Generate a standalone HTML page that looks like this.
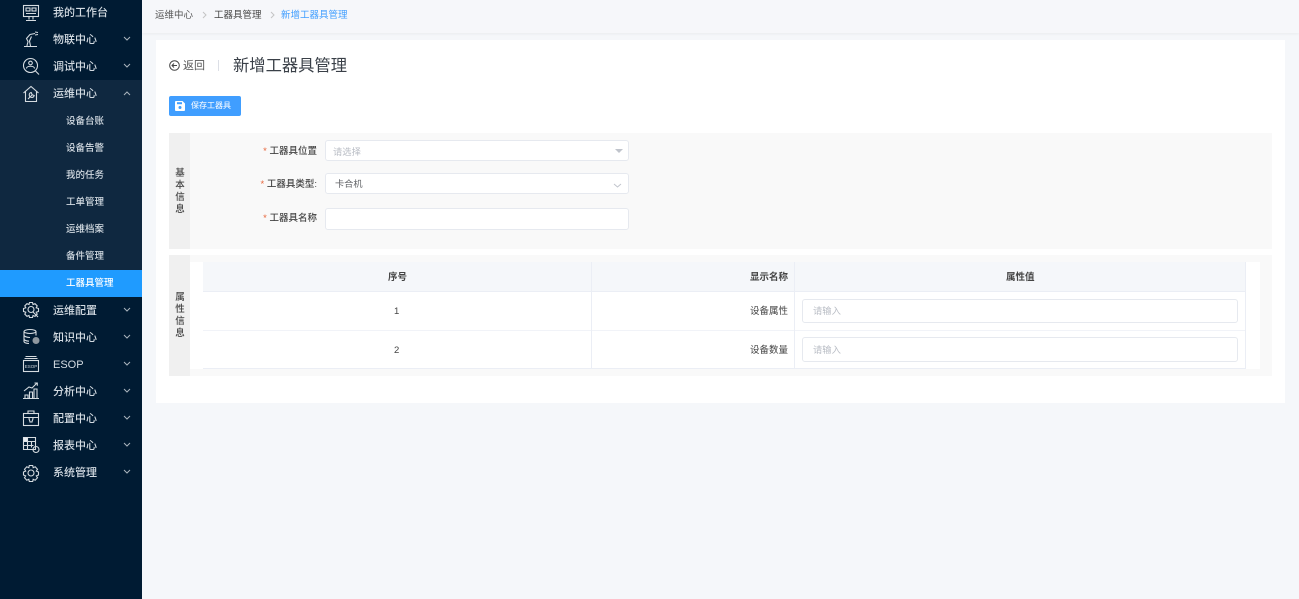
<!DOCTYPE html>
<html lang="zh"><head><meta charset="utf-8"><style>
*{box-sizing:border-box}
html,body{margin:0;padding:0;width:1299px;height:599px;overflow:hidden;background:#f5f7fa;font-family:"Liberation Sans","Noto Sans CJK SC",sans-serif;color:#333}
#w{position:absolute;left:0;top:0;width:1299px;height:599px;overflow:hidden;background:#f5f7fa;filter:blur(.35px)}
.a{position:absolute;white-space:nowrap}
#side{left:0;top:0;width:142px;height:599px;background:#001b33}
#open{left:0;top:80px;width:142px;height:190px;background:#0f2840}
#act{left:0;top:270px;width:142px;height:27px;background:#1f9bff}
.m{left:53px;font-size:11px;line-height:14px;color:#d3dbe2;font-weight:500}
.s{left:66px;font-size:9.5px;line-height:12px;color:#d3dbe2;font-weight:500}
.ic{left:21px;width:20px;height:20px;fill:none;stroke:#d5dbe0;stroke-width:1.1}
.ch{left:123px;width:8px;height:5px;fill:none;stroke:#aab5be;stroke-width:1}
.box{background:#fff;border:1px solid #e6e9ef;border-radius:3px}
.lab{font-size:9.5px;line-height:12px;color:#444;text-align:right;font-weight:500}
.lab i{color:#e8663c;font-style:normal}
.v{font-size:9.5px;line-height:12px;width:12px;text-align:center;color:#444;white-space:normal;font-weight:500}
.t{font-size:9.5px;line-height:12px;color:#444}
.ph{font-size:9.3px;line-height:12px;color:#b8bcc4}
</style></head><body><div id="w">
<div class="a" id="side"></div><div class="a" id="open"></div><div class="a" id="act"></div>

<svg class="a ic" style="top:3px" viewBox="0 0 20 20"><rect x="2.500" y="2.500" width="15" height="11"/><rect x="5" y="5" width="4" height="3"/><rect x="11" y="5" width="4" height="3"/><path d="M5 10.500h10M8 13.500v3M12 13.500v3M5 17.500h10"/></svg>
<svg class="a ic" style="top:30px" viewBox="0 0 20 20"><path d="M3 16.500h13M6 16c0-2 1-3 1-4.500L5.500 8.500 9 4.500l5-1M9.500 16l-1-5 2-4.500M14 2l3 .5M14 5l3-.5"/></svg>
<svg class="a ic" style="top:57px" viewBox="0 0 20 20"><circle cx="9.500" cy="8.500" r="7"/><circle cx="9.500" cy="6" r="1.800"/><path d="M5.500 11.500c0-3 8-3 8 0M14.500 14l3.500 3.500"/></svg>
<svg class="a ic" style="top:84px" viewBox="0 0 20 20"><path d="M2.500 9L10 2.500 17.500 9M4.500 7.500v10h11v-10"/><path d="M7 15l4-4M10.200 8.500a2.500 2.500 0 1 0 3 3l-2-.8z"/></svg>
<svg class="a ic" style="top:300px" viewBox="0 0 20 20"><path d="M8.500 2.500h3l.5 2 2-.8 2.200 2.200-1 1.900 2.300.7v3l-2.300.7 1 1.900-2.200 2.200-2-.8-.5 2h-3l-.5-2-2 .8-2.200-2.200 1-1.900-2.300-.7v-3l2.300-.7-1-1.900 2.200-2.200 2 .8z"/><circle cx="10" cy="9.500" r="3"/><path d="M12 12l5 5"/></svg>
<svg class="a ic" style="top:327px" viewBox="0 0 20 20"><ellipse cx="9" cy="4.500" rx="6" ry="2"/><path d="M3 4.500v10c0 1 2 2 5 2M3 8c0 1.500 3 2.500 6 2.500M3 12c0 1 2 2 5 2.200M15 4.500v4"/><circle cx="15" cy="13.500" r="3.500" fill="#8f98a0" stroke="none"/></svg>
<svg class="a ic" style="top:354px" viewBox="0 0 20 20"><path d="M4.500 2.500h11M3.500 4.500h13"/><rect x="2.500" y="6.500" width="15" height="11"/><text x="10" y="14" font-size="4.500" text-anchor="middle" fill="#cfd6dc" stroke="none" font-family="Liberation Sans">ESOP</text></svg>
<svg class="a ic" style="top:381px" viewBox="0 0 20 20"><path d="M2 17.500h16M4 17v-3h3v3M8.500 17v-6h3v6M13 17V8h3v9M3 10l5-4 3 1 5-5M13.500 2h2.800v2.800"/></svg>
<svg class="a ic" style="top:408px" viewBox="0 0 20 20"><rect x="2.500" y="5.500" width="15" height="12"/><path d="M2.500 9.500h15M7 5.500V3h6v2.500M8 9.500c0 3 1 3 1 4.500h2c0-1.500 1-1.500 1-4.500"/></svg>
<svg class="a ic" style="top:435px" viewBox="0 0 20 20"><path d="M2.500 2.500h12v12h-12zM2.500 6.500h12M2.500 10.500h10M6.500 2.500v12M10.500 6.500v6"/><rect x="2.500" y="2.500" width="4" height="4" fill="#e6ebef" stroke="none"/><circle cx="15" cy="14.500" r="3"/></svg>
<svg class="a ic" style="top:463px" viewBox="0 0 20 20"><path d="M8.300 2.500h3.400l.5 2.200 2-.9 2.300 2.500-1.200 1.800 2.200.9v3l-2.200.9 1.200 1.800-2.300 2.500-2-.9-.5 2.200H8.300l-.5-2.200-2 .9-2.300-2.500 1.200-1.800-2.200-.9v-3l2.200-.9-1.200-1.800 2.300-2.500 2 .9z"/><circle cx="10" cy="10" r="3"/></svg>

<div class="a m" style="top:6px">我的工作台</div>
<div class="a m" style="top:33px">物联中心</div>
<div class="a m" style="top:60px">调试中心</div>
<div class="a m" style="top:87px">运维中心</div>
<div class="a s" style="top:116px">设备台账</div>
<div class="a s" style="top:143px">设备告警</div>
<div class="a s" style="top:170px">我的任务</div>
<div class="a s" style="top:197px">工单管理</div>
<div class="a s" style="top:224px">运维档案</div>
<div class="a s" style="top:251px">备件管理</div>
<div class="a s" style="top:278px;color:#fff">工器具管理</div>
<div class="a m" style="top:304px">运维配置</div>
<div class="a m" style="top:331px">知识中心</div>
<div class="a m" style="top:358px">ESOP</div>
<div class="a m" style="top:385px">分析中心</div>
<div class="a m" style="top:412px">配置中心</div>
<div class="a m" style="top:439px">报表中心</div>
<div class="a m" style="top:466px">系统管理</div>

<svg class="a ch" style="top:36px" viewBox="0 0 8 5"><path d="M1 1l3 3 3-3"/></svg>
<svg class="a ch" style="top:63px" viewBox="0 0 8 5"><path d="M1 1l3 3 3-3"/></svg>
<svg class="a ch" style="top:91px" viewBox="0 0 8 5"><path d="M1 4l3-3 3 3"/></svg>
<svg class="a ch" style="top:307px" viewBox="0 0 8 5"><path d="M1 1l3 3 3-3"/></svg>
<svg class="a ch" style="top:334px" viewBox="0 0 8 5"><path d="M1 1l3 3 3-3"/></svg>
<svg class="a ch" style="top:361px" viewBox="0 0 8 5"><path d="M1 1l3 3 3-3"/></svg>
<svg class="a ch" style="top:388px" viewBox="0 0 8 5"><path d="M1 1l3 3 3-3"/></svg>
<svg class="a ch" style="top:415px" viewBox="0 0 8 5"><path d="M1 1l3 3 3-3"/></svg>
<svg class="a ch" style="top:442px" viewBox="0 0 8 5"><path d="M1 1l3 3 3-3"/></svg>
<svg class="a ch" style="top:469px" viewBox="0 0 8 5"><path d="M1 1l3 3 3-3"/></svg>

<!-- top bar -->
<div class="a" style="left:142px;top:0;width:1157px;height:33px;background:#f6f7fa;box-shadow:0 1px 3px rgba(0,0,0,.05)"></div>
<div class="a t" style="left:155px;top:10px;color:#555">运维中心</div>
<svg class="a" style="left:202px;top:11px;width:5px;height:8px;fill:none;stroke:#c4c4c4" viewBox="0 0 5 8"><path d="M1 1l3 3-3 3"/></svg>
<div class="a t" style="left:214px;top:10px;color:#444">工器具管理</div>
<svg class="a" style="left:270px;top:11px;width:5px;height:8px;fill:none;stroke:#c4c4c4" viewBox="0 0 5 8"><path d="M1 1l3 3-3 3"/></svg>
<div class="a t" style="left:281px;top:10px;color:#409eff">新增工器具管理</div>

<!-- card -->
<div class="a" style="left:156px;top:40px;width:1129px;height:363px;background:#fff"></div>
<svg class="a" style="left:169px;top:60px;width:11px;height:11px;fill:none;stroke:#444" viewBox="0 0 11 11"><circle cx="5.500" cy="5.500" r="4.800"/><path d="M8 5.500H3M5 3.500l-2 2 2 2"/></svg>
<div class="a" style="left:183px;top:59px;font-size:11px;line-height:14px;color:#555">返回</div>
<div class="a" style="left:218px;top:60px;width:1px;height:11px;background:#dcdfe6"></div>
<div class="a" style="left:233px;top:56px;font-size:16.300px;line-height:20px;color:#3a4048">新增工器具管理</div>

<div class="a" style="left:169px;top:96px;width:72px;height:20px;background:#409eff;border-radius:2px"></div>
<svg class="a" style="left:175px;top:101px;width:10px;height:10px" viewBox="0 0 10 10"><path d="M0 1a1 1 0 0 1 1-1h6.500L10 2.500V9a1 1 0 0 1-1 1H1a1 1 0 0 1-1-1z" fill="#fff"/><rect x="2" y="1.200" width="5" height="2" fill="#409eff"/><circle cx="5" cy="6.500" r="1.500" fill="#409eff"/></svg>
<div class="a" style="left:191px;top:100px;font-size:8px;line-height:12px;color:#e8f3ff;font-weight:500">保存工器具</div>

<!-- section 1 -->
<div class="a" style="left:169px;top:133px;width:1103px;height:116px;background:#f9f9f9"></div>
<div class="a" style="left:169px;top:133px;width:21px;height:116px;background:#f0f0f0"></div>
<div class="a v" style="left:174px;top:168px">基本信息</div>
<div class="a lab" style="left:200px;top:146px;width:117px"><i>*</i> 工器具位置</div>
<div class="a lab" style="left:200px;top:179px;width:117px"><i>*</i> 工器具类型:</div>
<div class="a lab" style="left:200px;top:213px;width:117px"><i>*</i> 工器具名称</div>
<div class="a box" style="left:325px;top:140px;width:304px;height:21px"></div>
<div class="a ph" style="left:333px;top:146px">请选择</div>
<div class="a" style="left:615px;top:149px;border:4px solid transparent;border-top:4px solid #c0c4cc;border-bottom:0"></div>
<div class="a box" style="left:325px;top:173px;width:304px;height:21px"></div>
<div class="a t" style="left:335px;top:178px;color:#606266;font-size:9.200px">卡合机</div>
<svg class="a" style="left:613px;top:183px;width:9px;height:5px;fill:none;stroke:#c0c4cc" viewBox="0 0 9 5"><path d="M1 1l3.500 3L8 1"/></svg>
<div class="a box" style="left:325px;top:208px;width:304px;height:22px"></div>

<!-- section 2 -->
<div class="a" style="left:169px;top:255px;width:1103px;height:121px;background:#f9f9f9"></div>
<div class="a" style="left:169px;top:255px;width:21px;height:121px;background:#f0f0f0"></div>
<div class="a v" style="left:174px;top:292px">属性信息</div>
<div class="a" style="left:190px;top:262px;width:1070px;height:107px;background:#fff"></div>
<div class="a" style="left:203px;top:262px;width:1043px;height:30px;background:#f5f7fa"></div>
<div class="a" style="left:203px;top:291px;width:1043px;height:1px;background:#ebeef5"></div>
<div class="a" style="left:203px;top:330px;width:1043px;height:1px;background:#f1f3f8"></div>
<div class="a" style="left:203px;top:368px;width:1043px;height:1px;background:#ebeef5"></div>
<div class="a" style="left:591px;top:262px;width:1px;height:107px;background:#ebeef5"></div>
<div class="a" style="left:794px;top:262px;width:1px;height:107px;background:#ebeef5"></div>
<div class="a" style="left:1245px;top:262px;width:1px;height:107px;background:#ebeef5"></div>
<div class="a t" style="left:388px;top:272px;font-weight:700;color:#444">序号</div>
<div class="a t" style="left:750px;top:272px;font-weight:700;color:#444">显示名称</div>
<div class="a t" style="left:1006px;top:272px;font-weight:700;color:#444">属性值</div>
<div class="a t" style="left:394px;top:306px">1</div>
<div class="a t" style="left:394px;top:345px">2</div>
<div class="a t" style="left:750px;top:306px">设备属性</div>
<div class="a t" style="left:750px;top:345px">设备数量</div>
<div class="a box" style="left:802px;top:299px;width:436px;height:24px"></div>
<div class="a ph" style="left:813px;top:305px">请输入</div>
<div class="a box" style="left:802px;top:337px;width:436px;height:25px"></div>
<div class="a ph" style="left:813px;top:344px">请输入</div>
</div></body></html>
